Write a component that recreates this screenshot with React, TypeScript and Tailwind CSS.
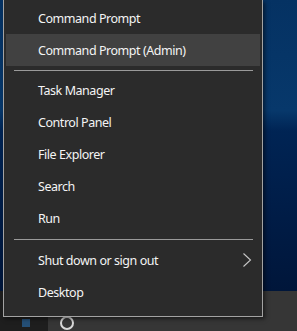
import React from "react";

const Row = ({ label, active, chevron }: { label: string; active?: boolean; chevron?: boolean }) => (
  <div
    className={`h-[32px] mx-[2px] pl-[32px] pr-[8px] pt-[2px] flex items-center justify-between text-[12.5px] tracking-[-0.45px] text-[#f4f4f4] ${
      active ? "bg-[#414141]" : ""
    }`}
  >
    <span className="leading-none">{label}</span>
    {chevron && (
      <svg width="10" height="16" viewBox="0 0 10 16" className="-mt-[2px]">
        <path d="M1.5 1.5 L8.5 8 L1.5 14.5" fill="none" stroke="#c8c8c8" strokeWidth="1.1" />
      </svg>
    )}
  </div>
);

export default function App() {
  return (
    <div
      className="relative w-[297px] h-[331px] overflow-hidden flex flex-col"
      style={{ fontFamily: '"Noto Sans", "Open Sans", sans-serif' }}
    >
      <div className="flex-1 bg-[linear-gradient(180deg,#053263_0%,#07386b_38%,#002454_45%,#001c46_75%,#00163a_100%)]" />
      <div className="h-[40px] flex bg-[#343434]">
        <div className="w-[48px] bg-[#1e1e1e] flex items-end pl-[22px]">
          <div className="w-[8px] h-[8px] mb-[4px] bg-[#2a6fb0]/60" />
        </div>
        <div className="flex-1 bg-[#363636] pl-[12px] pt-[25px]">
          <div className="w-[14px] h-[14px] rounded-full border-[2px] border-[#d8d8d8]" />
        </div>
      </div>

      <div className="absolute left-[3px] top-0 w-[260px] h-[317px] bg-[#2b2b2b] border-l border-r border-b border-[#a3a3a3] pt-[2px] shadow-[2px_2px_4px_rgba(0,0,0,0.5)]">
        <Row label="Command Prompt" />
        <Row label="Command Prompt (Admin)" active />
        <div className="mt-[4px] mb-[3px] ml-[10px] mr-[9px] h-px bg-[#9a9a9a]" />
        <Row label="Task Manager" />
        <Row label="Control Panel" />
        <Row label="File Explorer" />
        <Row label="Search" />
        <Row label="Run" />
        <div className="mt-[5px] mb-[4px] ml-[10px] mr-[9px] h-px bg-[#9a9a9a]" />
        <Row label="Shut down or sign out" chevron />
        <Row label="Desktop" />
      </div>
    </div>
  );
}
